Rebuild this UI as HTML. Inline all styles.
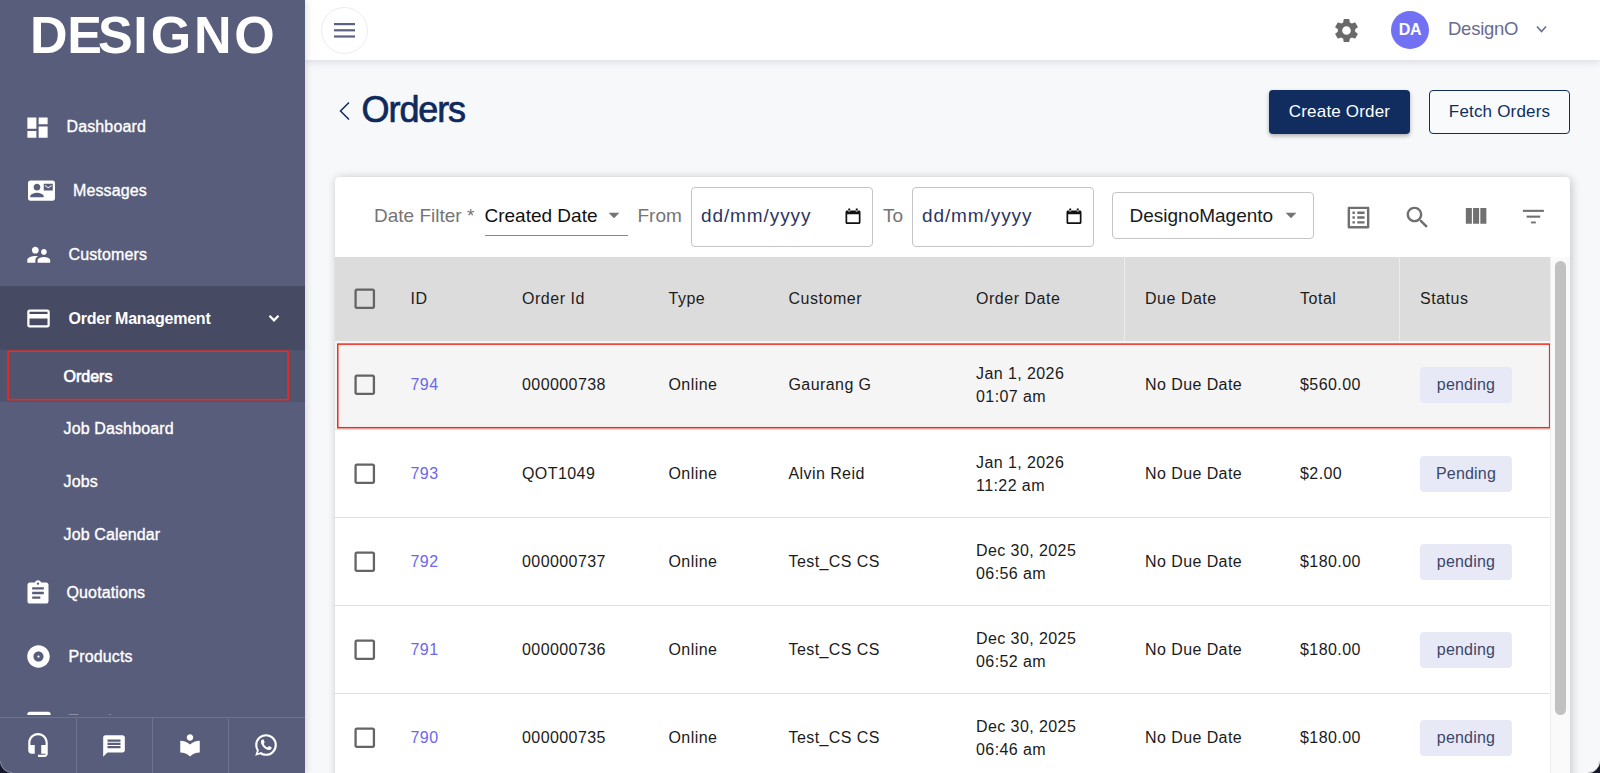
<!DOCTYPE html>
<html lang="en">
<head>
<meta charset="utf-8">
<title>Orders</title>
<style>
*{box-sizing:border-box;margin:0;padding:0}
html,body{width:1600px;height:773px;overflow:hidden;background:#f7f8fa;font-family:"Liberation Sans",sans-serif;}
body{position:relative}
.abs{position:absolute}
svg{display:block;position:absolute}
/* sidebar */
#side{position:absolute;left:0;top:0;width:305px;height:773px;background:#585d7b;box-shadow:2px 0 6px rgba(0,0,0,.12);z-index:5;overflow:hidden}
#side .act{position:absolute;left:0;top:286px;width:305px;height:64px;background:#464a62}
.mi{position:absolute;color:#fff;font-size:16px;line-height:20px;white-space:nowrap;-webkit-text-stroke:.35px #fff;letter-spacing:.13px;margin-top:.5px}
.mi.b{font-weight:bold;-webkit-text-stroke:0;letter-spacing:-.24px}
#side svg{fill:#fff}
#subact{position:absolute;left:0;top:350px;width:305px;height:52px;background:#50546f}
#redbox{position:absolute;left:7.5px;top:350.5px;width:281px;height:49px;border:1.7px solid #f02a1b}
#botbar{position:absolute;left:0;top:716.5px;width:305px;height:57px;background:#585d7b;border-top:1px solid #6d7290}
#botbar i{position:absolute;top:0;width:1px;height:56px;background:#6d7290}
/* topbar */
#top{position:absolute;left:305px;top:0;width:1295px;height:60px;background:#fff;box-shadow:0 2px 8px rgba(30,40,70,.13);z-index:3}
#ham{position:absolute;left:16px;top:7px;width:47px;height:47px;border-radius:50%;border:1.5px solid #ebebf3}
/* content */
.title{position:absolute;left:361.6px;top:88px;font-size:36px;line-height:44px;color:#0e2a5c;-webkit-text-stroke:.7px #0e2a5c;letter-spacing:-1.1px}
.btn{position:absolute;top:90px;height:43.5px;width:141px;border-radius:4px;font-size:17px;line-height:43.5px;text-align:center;letter-spacing:.18px}
#card{position:absolute;left:335px;top:177px;width:1235px;height:620px;background:#fff;border-radius:4.5px;box-shadow:0 0 9px rgba(0,0,0,.15),4px 2px 10px rgba(0,0,0,.08);overflow:hidden}
.tl{position:absolute;font-size:18px;line-height:22px;white-space:nowrap}
.inp{position:absolute;border:1px solid #c4c4c4;border-radius:4px;background:#fff}
#thead{position:absolute;left:0;top:80px;width:1215px;height:84.6px;background:#dcdcdc}
.th{position:absolute;top:31px;font-size:16px;line-height:22px;color:#1d1d1d;letter-spacing:.52px;white-space:nowrap}
.row{position:absolute;left:0;width:1215px;height:88px;border-bottom:1px solid #e0e0e0;background:#fff}
.td{position:absolute;top:33.2px;font-size:16px;line-height:22px;color:#1b1b1b;letter-spacing:.42px;white-space:nowrap}
.td.id{color:#6a68ee}
.td.dt{top:20.5px;line-height:23.3px}
.chip{position:absolute;left:1085px;top:26px;width:92px;height:36px;border-radius:4px;background:#e7e9f6;color:#3c466a;font-size:16px;line-height:36px;text-align:center;letter-spacing:.2px}
.cb{left:16.45px;width:27.5px;height:27.5px;fill:#646464}
</style>
</head>
<body>
<!-- SIDEBAR -->
<div id="side">
  <svg style="left:0;top:0" width="305" height="70" viewBox="0 0 305 70"><text x="30 67.3 98 133.2 150.7 194 234.2" y="52.5" font-family="Liberation Sans, sans-serif" font-weight="bold" font-size="52" fill="#fff">DESIGNO</text></svg>
  <div class="act"></div>
  <div id="subact"></div>
  <svg style="left:0;top:345px" width="300" height="60" viewBox="0 0 300 60"><rect x="8.1" y="6.2" width="280" height="48.4" fill="none" stroke="#f02a1b" stroke-width="1.6"/></svg>
  <svg style="left:24.1px;top:113.6px" width="27" height="27" viewBox="0 0 24 24"><path d="M3 13h8V3H3v10zm0 8h8v-6H3v6zm10 0h8V11h-8v10zm0-18v6h8V3h-8z"/></svg>
  <div class="mi" style="left:66.5px;top:116px">Dashboard</div>
  <svg style="left:27.8px;top:177.3px" width="27" height="27" viewBox="0 0 24 24"><path d="M21 8V7l-3 2-3-2v1l3 2 3-2zm1-5H2C.9 3 0 3.9 0 5v14c0 1.1.9 2 2 2h20c1.1 0 1.99-.9 1.99-2L24 5c0-1.1-.9-2-2-2zM8 6c1.66 0 3 1.34 3 3s-1.34 3-3 3-3-1.34-3-3 1.34-3 3-3zm6 12H2v-1c0-2 4-3.1 6-3.1s6 1.1 6 3.1v1zm8-6h-8V6h8v6z"/></svg>
  <div class="mi" style="left:73px;top:180px">Messages</div>
  <svg style="left:25px;top:240.5px" width="27.5" height="27.5" viewBox="0 0 24 24"><path d="M16.5 12c1.38 0 2.49-1.12 2.49-2.5S17.88 7 16.5 7C15.12 7 14 8.12 14 9.5s1.12 2.5 2.5 2.5zM9 11c1.66 0 2.99-1.34 2.99-3S10.66 5 9 5C7.34 5 6 6.34 6 8s1.34 3 3 3zm7.5 3c-1.830 0-5.5.920-5.5 2.750V19h11v-2.250c0-1.830-3.670-2.750-5.5-2.750zM9 13c-2.330 0-7 1.170-7 3.5V19h7v-2.250c0-.850.330-2.340 2.370-3.470C10.5 13.100 9.660 13 9 13z"/></svg>
  <div class="mi" style="left:68.5px;top:244px">Customers</div>
  <svg style="left:25.25px;top:304.5px" width="27" height="27" viewBox="0 0 24 24"><path d="M20 4H4c-1.110 0-1.990.890-1.990 2L2 18c0 1.110.890 2 2 2h16c1.110 0 2-.890 2-2V6c0-1.110-.890-2-2-2zm0 14H4v-6h16v6zm0-10H4V6h16v2z"/></svg>
  <div class="mi b" style="left:68.5px;top:308px">Order Management</div>
  <svg style="left:268.4px;top:313.6px" width="12" height="9" viewBox="0 0 12 9"><path d="M1.500 1.8L6 6.3L10.500 1.800" fill="none" stroke="#fff" stroke-width="2.3"/></svg>
  <div class="mi" style="left:63.5px;top:366px;-webkit-text-stroke:.7px #fff;letter-spacing:0">Orders</div>
  <div class="mi" style="left:63.5px;top:418px">Job Dashboard</div>
  <div class="mi" style="left:63.5px;top:471px">Jobs</div>
  <div class="mi" style="left:63.5px;top:524px">Job Calendar</div>
  <svg style="left:24px;top:579px" width="28" height="28" viewBox="0 0 24 24"><path d="M19 3h-4.180C14.400 1.840 13.300 1 12 1c-1.300 0-2.400.840-2.820 2H5c-1.100 0-2 .900-2 2v14c0 1.100.900 2 2 2h14c1.100 0 2-.900 2-2V5c0-1.100-.900-2-2-2zm-7 0c.550 0 1 .450 1 1s-.450 1-1 1-1-.450-1-1 .450-1 1-1zm2 14H7v-2h7v2zm3-4H7v-2h10v2zm0-4H7V7h10v2z"/></svg>
  <div class="mi" style="left:66.5px;top:582px">Quotations</div>
  <svg style="left:25px;top:642.5px" width="27" height="27" viewBox="0 0 24 24"><path d="M12 2C6.480 2 2 6.480 2 12s4.480 10 10 10 10-4.480 10-10S17.520 2 12 2zm0 14.5c-2.490 0-4.5-2.010-4.5-4.5S9.510 7.5 12 7.5s4.5 2.010 4.5 4.5-2.010 4.5-4.5 4.5zm0-5.5c-.550 0-1 .450-1 1s.450 1 1 1 1-.450 1-1-.450-1-1-1z"/></svg>
  <div class="mi" style="left:68.5px;top:646px">Products</div>
  <svg style="left:25px;top:707px" width="28" height="28" viewBox="0 0 24 24"><path d="M20 4H4c-1.110 0-2 .890-2 2v12c0 1.110.890 2 2 2h16c1.110 0 2-.890 2-2V6c0-1.110-.890-2-2-2z"/></svg>
  <div class="mi" style="left:68.5px;top:711.5px">Templates</div>
  <div class="abs" style="left:0;top:715px;width:305px;height:3px;background:#585d7b"></div>
  <div id="botbar">
    <i style="left:76px"></i><i style="left:152px"></i><i style="left:228px"></i>
    <svg style="left:25px;top:14px" width="26" height="26" viewBox="0 0 24 24"><path d="M12 1c-4.970 0-9 4.030-9 9v7c0 1.660 1.340 3 3 3h3v-8H5v-2c0-3.870 3.130-7 7-7s7 3.130 7 7v2h-4v8h4v1h-7v2h6c1.660 0 3-1.340 3-3V10c0-4.970-4.030-9-9-9z"/></svg>
    <svg style="left:101px;top:15px" width="26" height="26" viewBox="0 0 24 24"><path d="M20 2H4c-1.100 0-1.990.900-1.990 2L2 22l4-4h14c1.100 0 2-.900 2-2V4c0-1.100-.900-2-2-2zM6 9h12v2H6V9zm12 5H6v-2h12v2zm0-6H6V6h12v2z"/></svg>
    <svg style="left:177px;top:14px" width="26" height="26" viewBox="0 0 24 24"><path d="M12 11.550C9.640 9.350 6.480 8 3 8v11c3.480 0 6.640 1.350 9 3.550 2.360-2.190 5.520-3.550 9-3.550V8c-3.480 0-6.640 1.350-9 3.550zM12 8c1.660 0 3-1.340 3-3s-1.340-3-3-3-3 1.340-3 3 1.340 3 3 3z"/></svg>
    <svg style="left:253px;top:14px" width="26" height="26" viewBox="0 0 24 24"><path d="M16.750 13.960c.250.130.410.200.460.300.060.110.040.610-.210 1.180-.200.560-1.240 1.100-1.700 1.120-.460.020-.470.360-2.960-.730-2.490-1.090-3.990-3.750-4.110-3.920-.120-.170-.960-1.380-.920-2.610.050-1.220.690-1.800.950-2.040.240-.260.510-.290.680-.260h.470c.150 0 .360-.060.550.450l.690 1.870c.060.130.100.280.010.440l-.270.410-.390.420c-.120.120-.260.250-.120.5.120.260.620 1.090 1.320 1.780.910.880 1.710 1.170 1.950 1.300.240.140.390.120.540-.040l.810-.940c.190-.250.350-.190.580-.110l1.670.880M12 2a10 10 0 0 1 10 10 10 10 0 0 1-10 10c-1.970 0-3.800-.570-5.350-1.550L2 22l1.550-4.650A9.969 9.969 0 0 1 2 12 10 10 0 0 1 12 2m0 2a8 8 0 0 0-8 8c0 1.720.540 3.310 1.460 4.610L4.5 19.5l2.890-.960A7.950 7.950 0 0 0 12 20a8 8 0 0 0 8-8 8 8 0 0 0-8-8z"/></svg>
  </div>
</div>
<!-- TOPBAR -->
<div id="top">
  <div id="ham"></div>
  <svg style="left:29px;top:23px" width="21" height="15" viewBox="0 0 21 15" fill="#5d6182"><rect x="0" y="0" width="21" height="2.2"/><rect x="0" y="6.2" width="21" height="2.2"/><rect x="0" y="12.4" width="21" height="2.2"/></svg>
  <svg style="left:1026.7px;top:15.6px" width="29" height="29" viewBox="0 0 24 24" fill="#6a6a6a"><path d="M19.140 12.940c.040-.300.060-.610.060-.940 0-.320-.020-.640-.070-.940l2.030-1.580c.180-.140.230-.410.120-.610l-1.920-3.320c-.120-.220-.370-.290-.590-.220l-2.390.960c-.5-.380-1.030-.700-1.620-.940l-.360-2.540c-.040-.240-.240-.410-.480-.410h-3.840c-.240 0-.430.170-.470.410l-.360 2.540c-.590.240-1.130.570-1.620.940l-2.390-.960c-.220-.080-.470 0-.590.220L2.740 8.870c-.120.210-.080.470.120.610l2.030 1.580c-.050.300-.090.630-.090.940s.020.640.070.940l-2.030 1.580c-.180.140-.230.410-.120.610l1.920 3.320c.120.220.370.290.590.220l2.390-.960c.5.380 1.030.700 1.620.940l.360 2.540c.050.240.240.410.480.410h3.840c.240 0 .440-.170.470-.410l.360-2.540c.590-.240 1.130-.560 1.620-.940l2.390.960c.220.080.470 0 .590-.220l1.920-3.320c.120-.220.070-.470-.120-.610l-2.010-1.580zM12 15.600c-1.980 0-3.600-1.620-3.600-3.600s1.620-3.600 3.600-3.600 3.600 1.620 3.600 3.600-1.620 3.600-3.600 3.600z"/></svg>
  <div class="abs" style="left:1086px;top:11px;width:38px;height:38px;border-radius:50%;background:#7270f3;color:#fff;font-weight:bold;font-size:16px;line-height:38px;text-align:center;letter-spacing:-.3px">DA</div>
  <div class="abs" style="left:1143px;top:18px;font-size:18.5px;line-height:22px;color:#676c90;letter-spacing:-.25px;white-space:nowrap">DesignO</div>
  <svg style="left:1231px;top:24.5px" width="11" height="9" viewBox="0 0 11 9" fill="none" stroke="#676c90" stroke-width="1.600"><path d="M1 1.5L5.5 6.5L10 1.5"/></svg>
</div>
<!-- CONTENT -->
<svg style="left:338px;top:101px" width="14" height="20" viewBox="0 0 14 20" fill="none" stroke="#0e2a5c" stroke-width="1.5"><path d="M11 1.5L2.5 10L11 18.5"/></svg>
<div class="title">Orders</div>
<div class="btn" style="left:1269px;background:#112d60;color:#fff;box-shadow:0 2px 4px rgba(0,0,0,.3)">Create Order</div>
<div class="btn" style="left:1429px;background:#f9fafc;color:#112d60;border:1.5px solid #112d60;line-height:41px">Fetch Orders</div>
<div id="card">
  <div class="tl" style="left:39px;top:28px;color:#757575;font-size:19px">Date Filter *</div>
  <div class="tl" style="left:149.5px;top:28px;color:#111;font-size:19px">Created Date</div>
  <svg style="left:265.7px;top:25px" width="26" height="26" viewBox="0 0 24 24" fill="#757575"><path d="M7 10l5 5 5-5z"/></svg>
  <div class="abs" style="left:149.5px;top:57.7px;width:143.5px;height:1.2px;background:#8a8a8a"></div>
  <div class="tl" style="left:302.5px;top:28px;color:#757575;font-size:19px">From</div>
  <div class="inp" style="left:355.8px;top:10px;width:182.2px;height:60px"></div>
  <div class="tl" style="left:366px;top:27.5px;color:#2c3561;font-size:19px;letter-spacing:.9px">dd/mm/yyyy</div>
  <svg class="cal" style="left:509.5px;top:31px" width="16" height="17" viewBox="0 0 16 17"><path d="M2 2.5h12c.800 0 1.5.700 1.5 1.5v10.5c0 .800-.700 1.5-1.5 1.5H2c-.800 0-1.5-.700-1.5-1.5V4C.5 3.200 1.200 2.5 2 2.5zM2.200 6.200v8.100h11.600V6.200zM3.300.5h1.900v3H3.300zM10.800.5h1.900v3h-1.900z" fill="#111" fill-rule="evenodd"/></svg>
  <div class="tl" style="left:548px;top:28px;color:#757575;font-size:19px">To</div>
  <div class="inp" style="left:577px;top:10px;width:181.5px;height:60px"></div>
  <div class="tl" style="left:587px;top:27.5px;color:#2c3561;font-size:19px;letter-spacing:.9px">dd/mm/yyyy</div>
  <svg class="cal" style="left:730.5px;top:31px" width="16" height="17" viewBox="0 0 16 17"><path d="M2 2.5h12c.800 0 1.5.700 1.5 1.5v10.5c0 .800-.700 1.5-1.5 1.5H2c-.800 0-1.5-.700-1.5-1.5V4C.5 3.200 1.200 2.5 2 2.5zM2.200 6.200v8.100h11.600V6.200zM3.300.5h1.900v3H3.300zM10.800.5h1.900v3h-1.900z" fill="#111" fill-rule="evenodd"/></svg>
  <div class="inp" style="left:777px;top:15.3px;width:202px;height:47px"></div>
  <div class="tl" style="left:794.5px;top:28px;color:#1a1a1a;font-size:19px">DesignoMagento</div>
  <svg style="left:942.5px;top:25px" width="26" height="26" viewBox="0 0 24 24" fill="#757575"><path d="M7 10l5 5 5-5z"/></svg>
  <svg style="left:1009.1px;top:25.7px" width="29" height="29" viewBox="0 0 24 24" fill="#707070"><path d="M19 5v14H5V5h14m1.100-2H3.900c-.5 0-.900.400-.900.900v16.200c0 .400.400.900.900.900h16.200c.400 0 .900-.5.900-.900V3.900c0-.5-.5-.900-.900-.900zM11 7h6v2h-6V7zm0 4h6v2h-6v-2zm0 4h6v2h-6zM7 7h2v2H7zm0 4h2v2H7zm0 4h2v2H7z"/></svg>
  <svg style="left:1067.7px;top:26.3px" width="29" height="29" viewBox="0 0 24 24" fill="#707070"><path d="M15.5 14h-.790l-.280-.270C15.410 12.590 16 11.110 16 9.5 16 5.910 13.090 3 9.5 3S3 5.910 3 9.5 5.910 16 9.5 16c1.610 0 3.090-.590 4.230-1.570l.270.280v.790l5 4.990L20.490 19l-4.990-5zm-6 0C7.010 14 5 11.990 5 9.5S7.010 5 9.5 5 14 7.010 14 9.5 11.990 14 9.5 14z"/></svg>
  <svg style="left:1125.8px;top:25.4px" width="29" height="29" viewBox="0 0 24 24" fill="#707070"><path d="M10 18h5V5h-5v13zm-6 0h5V5H4v13zM16 5v13h5V5h-5z"/></svg>
  <svg style="left:1187px;top:30px" width="24" height="18" viewBox="0 0 24 18" fill="#707070"><rect x=".9" y="2.8" width="21" height="2.1"/><rect x="4.6" y="8.6" width="13.6" height="2.1"/><rect x="9.1" y="14.5" width="4.7" height="1.9"/></svg>
  <div id="thead">
    <svg class="cb" style="top:27.6px" viewBox="0 0 24 24"><path d="M19 5v14H5V5h14m0-2H5c-1.100 0-2 .900-2 2v14c0 1.100.900 2 2 2h14c1.100 0 2-.900 2-2V5c0-1.100-.900-2-2-2z"/></svg>
    <div class="th" style="left:75.5px">ID</div>
    <div class="th" style="left:187px">Order Id</div>
    <div class="th" style="left:333.5px">Type</div>
    <div class="th" style="left:453.5px">Customer</div>
    <div class="th" style="left:641px">Order Date</div>
    <div class="th" style="left:810px">Due Date</div>
    <div class="th" style="left:965px">Total</div>
    <div class="th" style="left:1085px">Status</div>
    <div class="abs" style="left:789px;top:0;width:1px;height:84px;background:#ececec"></div>
    <div class="abs" style="left:1064px;top:0;width:1px;height:84px;background:#ececec"></div>
  </div>
  <div class="row" style="top:164px;background:#f5f5f5;height:89px;">
    <svg class="cb" style="top:30.1px" viewBox="0 0 24 24"><path d="M19 5v14H5V5h14m0-2H5c-1.100 0-2 .900-2 2v14c0 1.100.900 2 2 2h14c1.100 0 2-.900 2-2V5c0-1.100-.900-2-2-2z"/></svg>
    <div class="td id" style="left:75.5px">794</div>
    <div class="td" style="left:187px">000000738</div>
    <div class="td" style="left:333.5px">Online</div>
    <div class="td" style="left:453.5px">Gaurang G</div>
    <div class="td dt" style="left:641px">Jan 1, 2026<br>01:07 am</div>
    <div class="td" style="left:810px">No Due Date</div>
    <div class="td" style="left:965px">$560.00</div>
    <div class="chip">pending</div>
  </div>
  <div class="row" style="top:253px;">
    <svg class="cb" style="top:30.1px" viewBox="0 0 24 24"><path d="M19 5v14H5V5h14m0-2H5c-1.100 0-2 .900-2 2v14c0 1.100.900 2 2 2h14c1.100 0 2-.900 2-2V5c0-1.100-.900-2-2-2z"/></svg>
    <div class="td id" style="left:75.5px">793</div>
    <div class="td" style="left:187px">QOT1049</div>
    <div class="td" style="left:333.5px">Online</div>
    <div class="td" style="left:453.5px">Alvin Reid</div>
    <div class="td dt" style="left:641px">Jan 1, 2026<br>11:22 am</div>
    <div class="td" style="left:810px">No Due Date</div>
    <div class="td" style="left:965px">$2.00</div>
    <div class="chip">Pending</div>
  </div>
  <div class="row" style="top:341px;">
    <svg class="cb" style="top:30.1px" viewBox="0 0 24 24"><path d="M19 5v14H5V5h14m0-2H5c-1.100 0-2 .900-2 2v14c0 1.100.900 2 2 2h14c1.100 0 2-.900 2-2V5c0-1.100-.900-2-2-2z"/></svg>
    <div class="td id" style="left:75.5px">792</div>
    <div class="td" style="left:187px">000000737</div>
    <div class="td" style="left:333.5px">Online</div>
    <div class="td" style="left:453.5px">Test_CS CS</div>
    <div class="td dt" style="left:641px">Dec 30, 2025<br>06:56 am</div>
    <div class="td" style="left:810px">No Due Date</div>
    <div class="td" style="left:965px">$180.00</div>
    <div class="chip">pending</div>
  </div>
  <div class="row" style="top:429px;">
    <svg class="cb" style="top:30.1px" viewBox="0 0 24 24"><path d="M19 5v14H5V5h14m0-2H5c-1.100 0-2 .900-2 2v14c0 1.100.900 2 2 2h14c1.100 0 2-.900 2-2V5c0-1.100-.900-2-2-2z"/></svg>
    <div class="td id" style="left:75.5px">791</div>
    <div class="td" style="left:187px">000000736</div>
    <div class="td" style="left:333.5px">Online</div>
    <div class="td" style="left:453.5px">Test_CS CS</div>
    <div class="td dt" style="left:641px">Dec 30, 2025<br>06:52 am</div>
    <div class="td" style="left:810px">No Due Date</div>
    <div class="td" style="left:965px">$180.00</div>
    <div class="chip">pending</div>
  </div>
  <div class="row" style="top:517px;">
    <svg class="cb" style="top:30.1px" viewBox="0 0 24 24"><path d="M19 5v14H5V5h14m0-2H5c-1.100 0-2 .900-2 2v14c0 1.100.900 2 2 2h14c1.100 0 2-.900 2-2V5c0-1.100-.900-2-2-2z"/></svg>
    <div class="td id" style="left:75.5px">790</div>
    <div class="td" style="left:187px">000000735</div>
    <div class="td" style="left:333.5px">Online</div>
    <div class="td" style="left:453.5px">Test_CS CS</div>
    <div class="td dt" style="left:641px">Dec 30, 2025<br>06:46 am</div>
    <div class="td" style="left:810px">No Due Date</div>
    <div class="td" style="left:965px">$180.00</div>
    <div class="chip">pending</div>
  </div>
  <svg style="left:0;top:160px" width="1220" height="100" viewBox="0 0 1220 100"><rect x="2.75" y="7.1" width="1211.9" height="83.6" fill="none" stroke="#f5281a" stroke-width="1.5"/></svg>
  <div class="abs" style="left:1215px;top:80px;width:20px;height:540px;background:#fafafa;border-left:1px solid #ededed"></div>
  <div class="abs" style="left:1220.2px;top:84px;width:11.2px;height:454px;border-radius:5.6px;background:#c1c1c1"></div>
</div>
<svg style="left:0;top:761px;z-index:20" width="12" height="12" viewBox="0 0 12 12"><path d="M0 0V12H12A12 12 0 0 1 0 0Z" fill="#17172b"/><path d="M.5 0A11.5 11.5 0 0 0 12 11.5" fill="none" stroke="#9a9db0" stroke-width="1" opacity=".7"/></svg>
<svg style="left:1588px;top:761px;z-index:20" width="12" height="12" viewBox="0 0 12 12"><path d="M12 0V12H0A12 12 0 0 0 12 0Z" fill="#17172b"/><path d="M11.5 0A11.5 11.5 0 0 1 0 11.5" fill="none" stroke="#c8c8cc" stroke-width="1" opacity=".8"/></svg>
</body>
</html>
